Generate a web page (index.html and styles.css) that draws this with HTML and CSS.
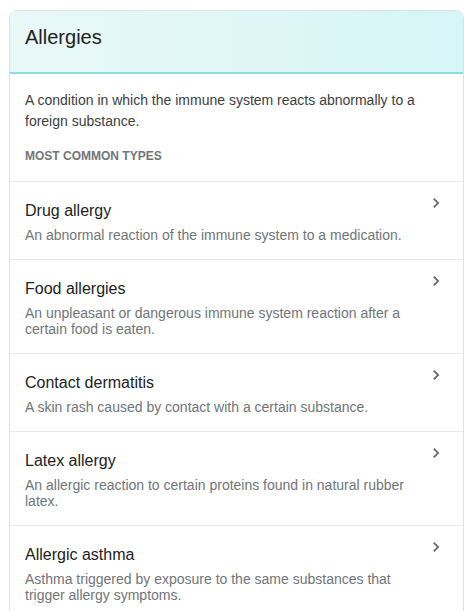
FILE: index.html
```html
<!DOCTYPE html>
<html lang="en">
<head>
<meta charset="utf-8">
<title>Allergies</title>
<link rel="stylesheet" href="styles.css">
</head>
<body>
<div class="card">
  <div class="card-header">
    <h1 class="card-title">Allergies</h1>
  </div>
  <div class="intro">
    <p class="intro-text">A condition in which the immune system reacts abnormally to a foreign substance.</p>
    <div class="section-label">MOST COMMON TYPES</div>
  </div>
  <ul class="types">
    <li class="type">
      <div class="type-body">
        <div class="type-title">Drug allergy</div>
        <div class="type-desc">An abnormal reaction of the immune system to a medication.</div>
      </div>
      <svg class="chevron" viewBox="0 0 24 24" width="20" height="20"><path d="M10 6L8.59 7.41 13.17 12l-4.58 4.59L10 18l6-6z"/></svg>
    </li>
    <li class="type">
      <div class="type-body">
        <div class="type-title">Food allergies</div>
        <div class="type-desc">An unpleasant or dangerous immune system reaction after a certain food is eaten.</div>
      </div>
      <svg class="chevron" viewBox="0 0 24 24" width="20" height="20"><path d="M10 6L8.59 7.41 13.17 12l-4.58 4.59L10 18l6-6z"/></svg>
    </li>
    <li class="type">
      <div class="type-body">
        <div class="type-title">Contact dermatitis</div>
        <div class="type-desc">A skin rash caused by contact with a certain substance.</div>
      </div>
      <svg class="chevron" viewBox="0 0 24 24" width="20" height="20"><path d="M10 6L8.59 7.41 13.17 12l-4.58 4.59L10 18l6-6z"/></svg>
    </li>
    <li class="type">
      <div class="type-body">
        <div class="type-title">Latex allergy</div>
        <div class="type-desc">An allergic reaction to certain proteins found in natural rubber latex.</div>
      </div>
      <svg class="chevron" viewBox="0 0 24 24" width="20" height="20"><path d="M10 6L8.59 7.41 13.17 12l-4.58 4.59L10 18l6-6z"/></svg>
    </li>
    <li class="type">
      <div class="type-body">
        <div class="type-title">Allergic asthma</div>
        <div class="type-desc">Asthma triggered by exposure to the same substances that trigger allergy symptoms.</div>
      </div>
      <svg class="chevron" viewBox="0 0 24 24" width="20" height="20"><path d="M10 6L8.59 7.41 13.17 12l-4.58 4.59L10 18l6-6z"/></svg>
    </li>
  </ul>
</div>
</body>
</html>
```
FILE: styles.css
```css
html, body {
  margin: 0;
  padding: 0;
  background: #ffffff;
}
body {
  padding: 10px 0 0 9px;
  font-family: "Liberation Sans", Arial, sans-serif;
  color: #222222;
}
.card {
  width: 455px;
  box-sizing: border-box;
  border: 1px solid #dfe1e5;
  border-radius: 8px 8px 0 0;
  overflow: hidden;
  background: #ffffff;
}
.card-header {
  background: linear-gradient(90deg, #e9f8f8 0%, #d6f5f6 100%);
  border-bottom: 2px solid #8edcdc;
  padding: 14px 15px 23px;
}
.card-title {
  margin: 0;
  font-size: 20px;
  line-height: 24px;
  font-weight: normal;
  color: #222222;
}
.intro {
  padding: 16px 15px 17px;
  border-bottom: 1px solid #e8eaed;
}
.intro-text {
  margin: 0;
  font-size: 14px;
  line-height: 21px;
  color: #3c4043;
}
.section-label {
  margin-top: 16px;
  font-size: 12px;
  line-height: 16px;
  font-weight: bold;
  color: #70757a;
}
.types {
  list-style: none;
  margin: 0;
  padding: 0;
}
.type {
  display: flex;
  align-items: flex-start;
  padding: 19px 0 16px 15px;
  border-bottom: 1px solid #e8eaed;
}
.type-body {
  flex: 1;
  min-width: 0;
}
.type-title {
  font-size: 16px;
  line-height: 20px;
  color: #222222;
}
.type-desc {
  margin-top: 6px;
  font-size: 14px;
  line-height: 16px;
  color: #70757a;
}
.chevron {
  flex: none;
  margin: -8px 17px 0 11px;
  fill: #5f6368;
}
```
